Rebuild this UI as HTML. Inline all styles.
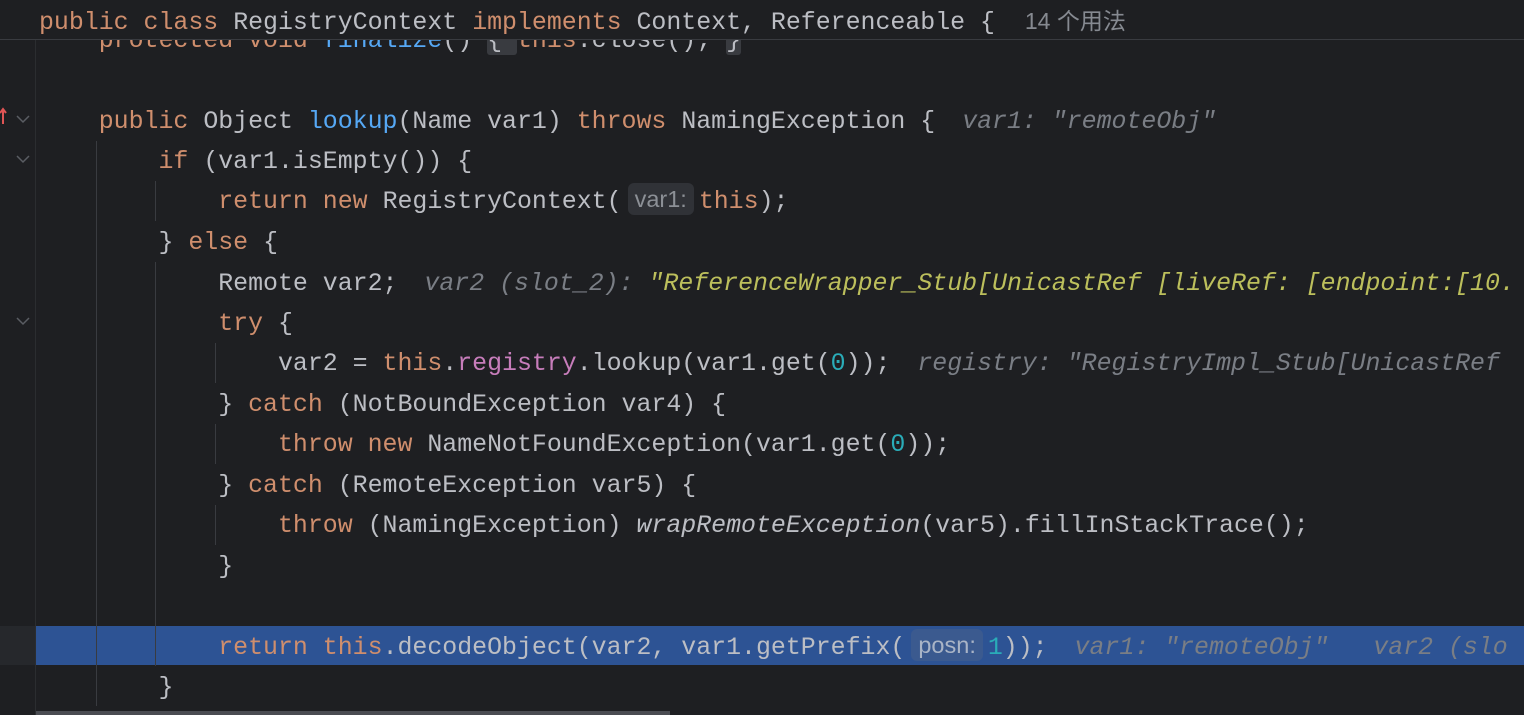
<!DOCTYPE html>
<html><head><meta charset="utf-8"><style>
body{margin:0;width:1524px;height:715px;background:#1e1f22;overflow:hidden;position:relative;font-family:"Liberation Mono",monospace;font-size:24.9px;color:#bcbec4}
.l{position:absolute;left:39px;height:40px;line-height:42px;white-space:pre}
.k{color:#cf8e6d}.m{color:#56a8f5}.f{color:#c77dbb}.n{color:#2aacb8}
.h{color:#7a7e85;font-style:italic;margin-left:12px}.y{color:#bcbf5c;font-style:italic}
.b{display:inline-block;font-family:"Liberation Sans",sans-serif;font-size:23.5px;background:#303237;color:#8c9096;border-radius:6px;height:32px;line-height:32px;padding:0 7px;margin:0 5px 0 6px;vertical-align:middle;position:relative;top:-2px}
.fb{background:#393b40;border-radius:3px}
.g{position:absolute;width:1px;background:#393b40}
</style></head><body>
<div class="g" style="left:35px;top:0;height:715px;background:#2b2d30"></div>
<div style="position:absolute;left:0;top:626px;width:35px;height:39px;background:#26282c"></div>
<div style="position:absolute;left:36px;top:626px;width:1488px;height:39px;background:#2d5394"></div>
<div class="g" style="left:96px;top:141px;height:565px"></div>
<div class="g" style="left:155px;top:181px;height:40px"></div>
<div class="g" style="left:155px;top:262px;height:404px"></div>
<div class="g" style="left:215px;top:343px;height:40px"></div>
<div class="g" style="left:215px;top:424px;height:40px"></div>
<div class="g" style="left:215px;top:505px;height:40px"></div>

<div class="l" style="top:20px"><span class="k">    protected void </span><span class="m">finalize</span>() <span class="fb">{ </span><span class="k">this</span>.close(); <span class="fb">}</span></div>
<div class="l" style="top:101px">    <span class="k">public </span>Object <span class="m">lookup</span>(Name var1) <span class="k">throws </span>NamingException { <span class="h">var1: "remoteObj"</span></div>
<div class="l" style="top:141px">        <span class="k">if </span>(var1.isEmpty()) {</div>
<div class="l" style="top:181px">            <span class="k">return new </span>RegistryContext(<span class="b">var1:</span><span class="k">this</span>);</div>
<div class="l" style="top:222px">        } <span class="k">else </span>{</div>
<div class="l" style="top:263px">            Remote var2; <span class="h">var2 (slot_2): </span><span class="y">"ReferenceWrapper_Stub[UnicastRef [liveRef: [endpoint:[10.</span></div>
<div class="l" style="top:303px">            <span class="k">try </span>{</div>
<div class="l" style="top:343px">                var2 = <span class="k">this</span>.<span class="f">registry</span>.lookup(var1.get(<span class="n">0</span>)); <span class="h">registry: "RegistryImpl_Stub[UnicastRef</span></div>
<div class="l" style="top:384px">            } <span class="k">catch </span>(NotBoundException var4) {</div>
<div class="l" style="top:424px">                <span class="k">throw new </span>NameNotFoundException(var1.get(<span class="n">0</span>));</div>
<div class="l" style="top:465px">            } <span class="k">catch </span>(RemoteException var5) {</div>
<div class="l" style="top:505px">                <span class="k">throw </span>(NamingException) <i>wrapRemoteException</i>(var5).fillInStackTrace();</div>
<div class="l" style="top:546px">            }</div>
<div class="l" style="top:627px">            <span class="k">return this</span>.decodeObject(var2, var1.getPrefix(<span class="b" style="background:#3b5a8f;color:#a9b4c6">posn:</span><span class="n">1</span>)); <span class="h">var1: "remoteObj"   var2 (slo</span></div>
<div class="l" style="top:667px">        }</div>

<div style="position:absolute;left:0;top:0;width:1524px;height:39px;background:#1e1f22;border-bottom:1px solid #393b40"></div>
<div class="l" style="top:0;height:40px"><span class="k">public class </span>RegistryContext <span class="k">implements </span>Context, Referenceable {  <span style="font-family:'Liberation Sans','Noto Sans CJK SC',sans-serif;font-size:23px;color:#868a91">14 个用法</span></div>

<svg style="position:absolute;left:0;top:0" width="36" height="715">
<g fill="none" stroke="#5a5d63" stroke-width="1.5">
<path d="M17 116 l6 6 l6 -6"/><path d="M17 156 l6 6 l6 -6"/><path d="M17 318 l6 6 l6 -6"/>
</g>
<g stroke="#e05555" stroke-width="2" fill="none"><path d="M3 124 v-14 M0 113 l3 -4 l3 4"/></g>
</svg>
<div style="position:absolute;left:36px;top:711px;width:634px;height:4px;background:#4a4c52"></div>
</body></html>
